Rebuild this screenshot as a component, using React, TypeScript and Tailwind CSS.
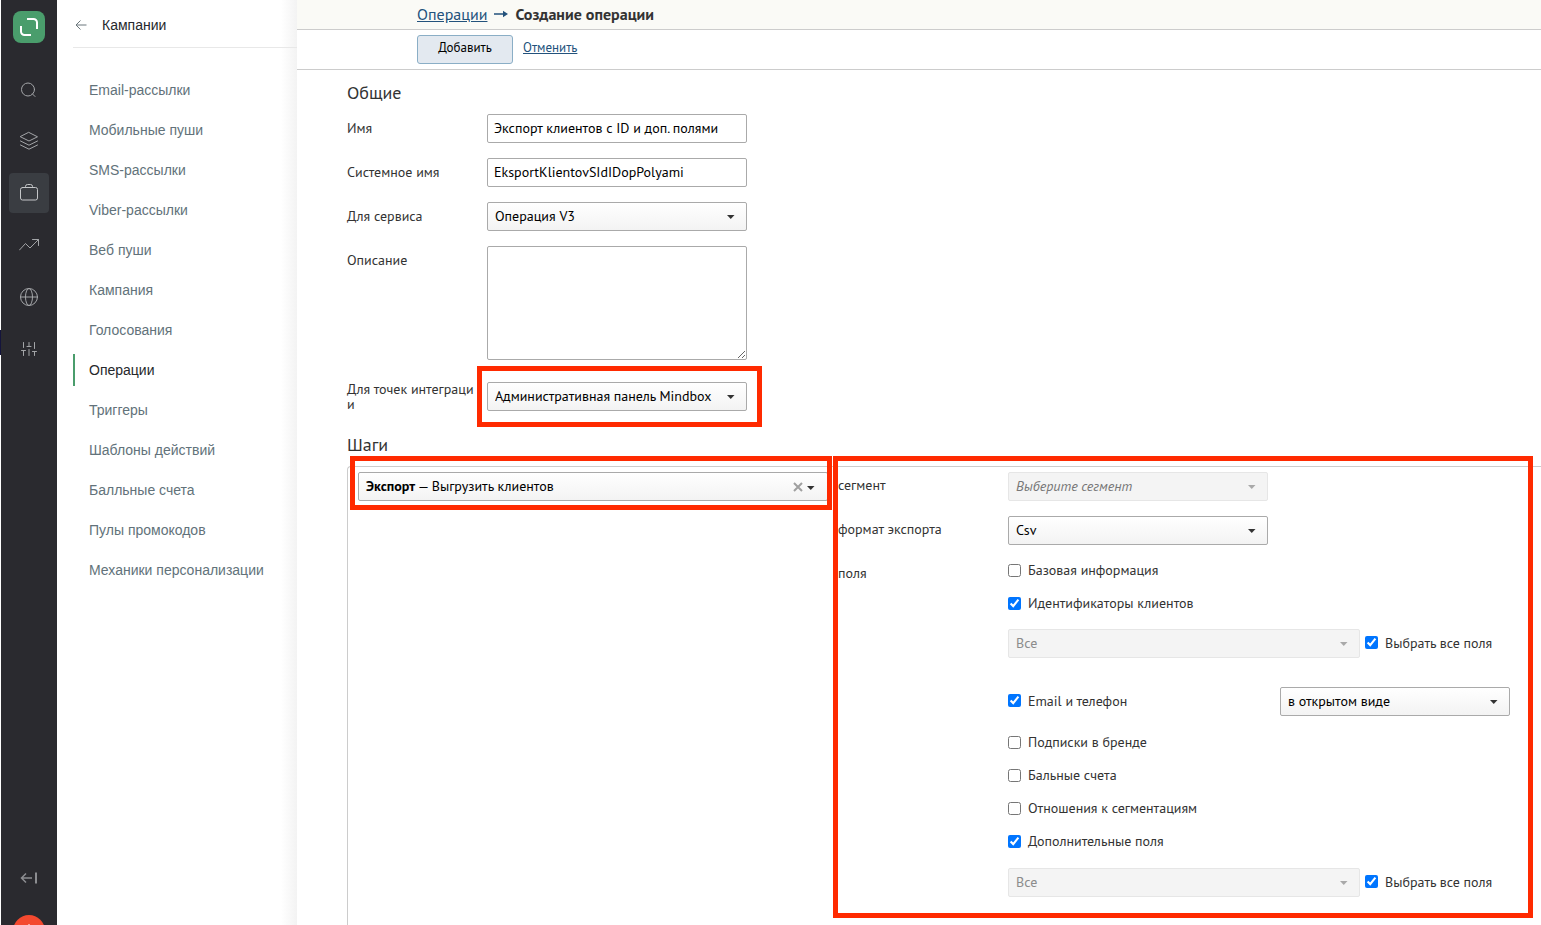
import React, { useState } from "react";

const navItems = [
  "Email-рассылки",
  "Мобильные пуши",
  "SMS-рассылки",
  "Viber-рассылки",
  "Веб пуши",
  "Кампания",
  "Голосования",
  "Операции",
  "Триггеры",
  "Шаблоны действий",
  "Балльные счета",
  "Пулы промокодов",
  "Механики персонализации",
];

const RailIcon: React.FC<{ children: React.ReactNode }> = ({ children }) => (
  <svg
    width="20"
    height="20"
    viewBox="0 0 20 20"
    fill="none"
    stroke="currentColor"
    strokeWidth="1"
    strokeLinecap="round"
    strokeLinejoin="round"
  >
    {children}
  </svg>
);

const railItems = [
  {
    label: "Поиск",
    icon: (
      <RailIcon>
        <circle cx="9" cy="10.5" r="6.5" />
        <path d="M13.5 15l2.5 2.5" />
      </RailIcon>
    ),
  },
  {
    label: "Данные",
    icon: (
      <RailIcon>
        <path d="M10 1.5l8.5 4.3L10 10 1.5 5.8z" />
        <path d="M1.5 10L10 14.2 18.5 10" />
        <path d="M1.5 14L10 18.2 18.5 14" />
      </RailIcon>
    ),
  },
  {
    label: "Кампании",
    active: true,
    icon: (
      <RailIcon>
        <rect x="1.5" y="4.5" width="17" height="12.5" rx="2" />
        <path d="M6.5 4.500V3.500a2 2 0 0 1 2-2h3a2 2 0 0 1 2 2v1" />
      </RailIcon>
    ),
  },
  {
    label: "Отчеты",
    icon: (
      <RailIcon>
        <path d="M0.5 15L6.5 8.500l4.500 4.500L19.500 4.500" />
        <path d="M13.5 4.500h6v6" />
      </RailIcon>
    ),
  },
  {
    label: "Интеграции",
    icon: (
      <RailIcon>
        <circle cx="10" cy="10" r="8.5" />
        <ellipse cx="10" cy="10" rx="3.5" ry="8.5" />
        <path d="M1.5 10h17" />
      </RailIcon>
    ),
  },
  {
    label: "Настройки",
    icon: (
      <RailIcon>
        <path d="M4.5 3.500v5M4.500 11.500v5M2.500 11.500h4" />
        <path d="M10 3.500v4M8 7.500h4M10 10.500v6" />
        <path d="M15.5 3.500v6M15.500 12.500v4M13.500 12.500h4" />
      </RailIcon>
    ),
  },
];

const Rail: React.FC = () => (
  <nav className="flex w-14 shrink-0 flex-col items-center overflow-hidden bg-[#2a2a2f] pt-[11px]">
    <a
      href="#"
      aria-label="Главная"
      className="flex size-8 items-center justify-center rounded-lg bg-[#4a9d6c]"
    >
      <svg width="20" height="20" viewBox="0 0 20 20" fill="none" stroke="#fff" strokeWidth="2">
        <path d="M8 2h6.500a3.500 3.500 0 0 1 3.500 3.500V12" />
        <path d="M2 9v5.500a3.500 3.500 0 0 0 3.500 3.500H12" />
      </svg>
    </a>
    <div className="mt-[26px] flex flex-col gap-3">
      {railItems.map((item) => (
        <button
          key={item.label}
          type="button"
          aria-label={item.label}
          className={
            item.active
              ? "flex size-10 items-center justify-center rounded bg-[#3a3d42] text-[#c4c6c8]"
              : "flex size-10 items-center justify-center rounded text-[#a3a5a8]"
          }
        >
          {item.icon}
        </button>
      ))}
    </div>
    <div className="mt-auto flex h-16 flex-col items-center gap-7 pt-2">
      <button type="button" aria-label="Свернуть меню" className="text-[#8c8d91]">
        <svg width="18" height="18" viewBox="0 0 18 18" fill="none" stroke="currentColor">
          <path d="M12 9H2M6 4.500L1.500 9 6 13.500" strokeWidth="1.5" />
          <path d="M16 3.500v11" strokeWidth="2" />
        </svg>
      </button>
      <button
        type="button"
        aria-label="Создать"
        className="flex size-8 shrink-0 items-center justify-center rounded-full bg-[#f4492f]"
      >
        <svg width="14" height="14" viewBox="0 0 14 14" stroke="#fff">
          <path d="M7 0v14M0 7h14" />
        </svg>
      </button>
    </div>
  </nav>
);

const SideMenu: React.FC = () => (
  <aside className="flex w-60 shrink-0 flex-col bg-linear-to-l from-[#f3f3f3] to-white to-[16px] pl-4 font-['Liberation_Sans',Arial,sans-serif] text-sm">
    <div className="flex h-12 items-center gap-[15px] border-b border-[#e8e8e8] pt-[3px]">
      <svg width="14" height="12" viewBox="0 0 14 12" fill="none" stroke="#6b777c">
        <path d="M13.5 6H3M7.500 1.500L3 6l4.500 4.500" />
      </svg>
      <span className="text-[#26282b]">Кампании</span>
    </div>
    <ul className="mt-[22px]">
      {navItems.map((item) => (
        <li key={item} className="flex h-10 items-center">
          {item === "Операции" ? (
            <a
              href="#"
              className="flex h-8 items-center border-l-2 border-[#4a9d6c] pl-3.5 text-[#26282b]"
            >
              {item}
            </a>
          ) : (
            <a href="#" className="pl-4 text-[#62727a]">
              {item}
            </a>
          )}
        </li>
      ))}
    </ul>
  </aside>
);

const Caret: React.FC<{ muted?: boolean }> = ({ muted }) => (
  <svg
    width="8"
    height="4"
    viewBox="0 0 8 4"
    className={
      muted
        ? "pointer-events-none absolute top-[13px] right-3 fill-[#a9a9a9]"
        : "pointer-events-none absolute top-[13px] right-3 fill-[#333]"
    }
  >
    <path d="M0 0h7.500L3.750 4z" />
  </svg>
);

interface SelectProps {
  id: string;
  value: string;
  width: string;
  disabled?: boolean;
  placeholder?: boolean;
  label?: string;
}

const Select: React.FC<SelectProps> = ({ id, value, width, disabled, placeholder, label }) => (
  <div className={`relative h-[29px] shrink-0 ${width}`}>
    <select
      id={id}
      aria-label={label}
      disabled={disabled}
      className={`h-full w-full appearance-none rounded-xs border pr-6 pb-0.5 pl-[7px] text-sm ${
        disabled
          ? "border-[#e6e6e6] bg-[#f4f4f4] text-[#8c8c8c] opacity-100"
          : "border-[#aaa] bg-linear-to-b from-white to-[#f3f3f3] text-black"
      } ${placeholder ? "italic text-[#777]" : ""}`}
    >
      <option>{value}</option>
    </select>
    <Caret muted={disabled} />
  </div>
);

const Field: React.FC<{ id: string; label: string; children: React.ReactNode }> = ({
  id,
  label,
  children,
}) => (
  <div className="flex">
    <label htmlFor={id} className="w-[140px] shrink-0 pt-[7px] pr-3 leading-[15px] break-all">
      {label}
    </label>
    {children}
  </div>
);

const Check: React.FC<{ label: string; checked?: boolean }> = ({ label, checked = false }) => {
  const [on, setOn] = useState(checked);
  return (
    <label className="flex items-center gap-[7px] leading-5">
      <input
        type="checkbox"
        checked={on}
        onChange={() => setOn(!on)}
        className="size-[13px] accent-[#0075ff]"
      />
      {label}
    </label>
  );
};

// "Все" drop-down together with its "select all" tick box
const FieldPicker: React.FC<{ id: string; label: string }> = ({ id, label }) => (
  <div className="flex items-center gap-[5px]">
    <Select id={id} label={label} value="Все" width="w-[352px]" disabled />
    <div className="pb-0.5">
      <Check label="Выбрать все поля" checked />
    </div>
  </div>
);

const StepPicker: React.FC = () => (
  <div className="relative flex h-[29px] items-center rounded-xs border border-[#aaa] bg-linear-to-b from-white to-[#f3f3f3] pr-3">
    <button
      type="button"
      aria-haspopup="listbox"
      className="h-full flex-1 pb-0.5 pl-[7px] text-left text-black"
    >
      <b>Экспорт</b> — Выгрузить клиентов
    </button>
    <button type="button" aria-label="Очистить" className="mr-3">
      <svg width="10" height="10" viewBox="0 0 10 10" stroke="#a0a0a0" strokeWidth="2">
        <path d="M1 1l8 8M9 1L1 9" />
      </svg>
    </button>
    <Caret />
    <div className="pointer-events-none absolute -top-[17px] -right-[5px] -bottom-[10px] -left-[9px] border-5 border-[#ff2a00]" />
  </div>
);

const StepParams: React.FC = () => (
  <div className="relative w-[703px] shrink-0">
    <div className="flex h-11">
      <label htmlFor="segment" className="w-[170px] pt-[3px]">
        сегмент
      </label>
      <Select id="segment" value="Выберите сегмент" width="w-[260px]" disabled placeholder />
    </div>
    <div className="flex h-11">
      <label htmlFor="format" className="w-[170px] pt-[3px]">
        формат экспорта
      </label>
      <Select id="format" value="Csv" width="w-[260px]" />
    </div>
    <div className="flex">
      <span className="w-[170px] shrink-0 pt-[3px]">поля</span>
      <div className="flex flex-1 flex-col">
        <div className="flex flex-col gap-[13px]">
          <Check label="Базовая информация" />
          <Check label="Идентификаторы клиентов" checked />
        </div>
        <div className="mt-4">
          <FieldPicker id="identifiers" label="Идентификаторы клиентов" />
        </div>
        <div className="mt-[29px] flex items-center justify-between pr-[31px]">
          <div className="pb-0.5">
            <Check label="Email и телефон" checked />
          </div>
          <Select id="contacts" label="Вид контактов" value="в открытом виде" width="w-[230px]" />
        </div>
        <div className="mt-4 flex flex-col gap-[13px]">
          <Check label="Подписки в бренде" />
          <Check label="Бальные счета" />
          <Check label="Отношения к сегментациям" />
          <Check label="Дополнительные поля" checked />
        </div>
        <div className="mt-[17px] pb-[21px]">
          <FieldPicker id="extra" label="Дополнительные поля" />
        </div>
      </div>
    </div>
    <div className="pointer-events-none absolute -top-4 right-2 bottom-0 -left-[5px] border-5 border-[#ff2a00]" />
  </div>
);

const App: React.FC = () => {
  const [name, setName] = useState("Экспорт клиентов с ID и доп. полями");
  const [systemName, setSystemName] = useState("EksportKlientovSIdIDopPolyami");
  const inputClass =
    "h-[29px] w-[260px] rounded-xs border border-[#aaa] bg-white px-1.5 pb-0.5 text-sm text-black";

  return (
    <div className="flex h-screen overflow-hidden bg-white font-['PT_Sans','Noto_Sans',sans-serif] text-sm text-[#333]">
      <div className="w-px shrink-0 pt-[330px]">
        <div className="h-[25px] bg-[#14143c]" />
      </div>
      <Rail />
      <SideMenu />
      <main className="flex min-w-0 flex-1 flex-col">
        <header className="flex h-[30px] shrink-0 items-center gap-[7px] border-b border-[#ccc] bg-[#fafaf6] pb-0.5 pl-[120px] text-base">
          <a href="#" className="text-[#23527c] underline">
            Операции
          </a>
          <svg width="14" height="8" viewBox="0 0 14 8" fill="#23527c">
            <path d="M0 3.300h10V4.700H0zM9 0.800L14 4 9 7.200z" />
          </svg>
          <h1 className="font-bold">Создание операции</h1>
        </header>
        <div className="flex h-10 shrink-0 items-center gap-2.5 border-b border-[#ccc] pl-[120px] text-[13px]">
          <button
            type="button"
            className="h-[29px] w-24 rounded-[3px] border border-[#8aaec6] bg-[#e3e9f0] pb-0.5 text-black"
          >
            Добавить
          </button>
          <a href="#" className="pb-0.5 text-[#23527c] underline">
            Отменить
          </a>
        </div>
        <div className="flex flex-1 flex-col pl-[50px]">
          <h2 className="mt-[11px] text-lg leading-6">Общие</h2>
          <div className="mt-[9px] flex flex-col gap-[15px]">
            <Field id="name" label="Имя">
              <input
                id="name"
                type="text"
                value={name}
                onChange={(e) => setName(e.target.value)}
                className={inputClass}
              />
            </Field>
            <Field id="system-name" label="Системное имя">
              <input
                id="system-name"
                type="text"
                value={systemName}
                onChange={(e) => setSystemName(e.target.value)}
                className={inputClass}
              />
            </Field>
            <Field id="service" label="Для сервиса">
              <Select id="service" value="Операция V3" width="w-[260px]" />
            </Field>
            <Field id="description" label="Описание">
              <textarea
                id="description"
                className="h-[114px] w-[260px] resize rounded-xs border border-[#aaa] bg-white p-1.5"
              />
            </Field>
            <Field id="points" label="Для точек интеграции">
              <div className="relative mt-[7px]">
                <Select id="points" value="Административная панель Mindbox" width="w-[260px]" />
                <div className="pointer-events-none absolute -top-4 -right-[15px] -bottom-[15px] -left-[10px] border-5 border-[#ff2a00]" />
              </div>
            </Field>
          </div>
          <h2 className="mt-[21px] text-lg leading-6">Шаги</h2>
          <section className="mt-[9px] flex flex-1 items-start rounded-tl border-t border-l border-[#ccc] pt-[5px]">
            <div className="min-w-0 flex-1 px-2.5">
              <StepPicker />
            </div>
            <StepParams />
          </section>
        </div>
      </main>
    </div>
  );
};

export default App;
